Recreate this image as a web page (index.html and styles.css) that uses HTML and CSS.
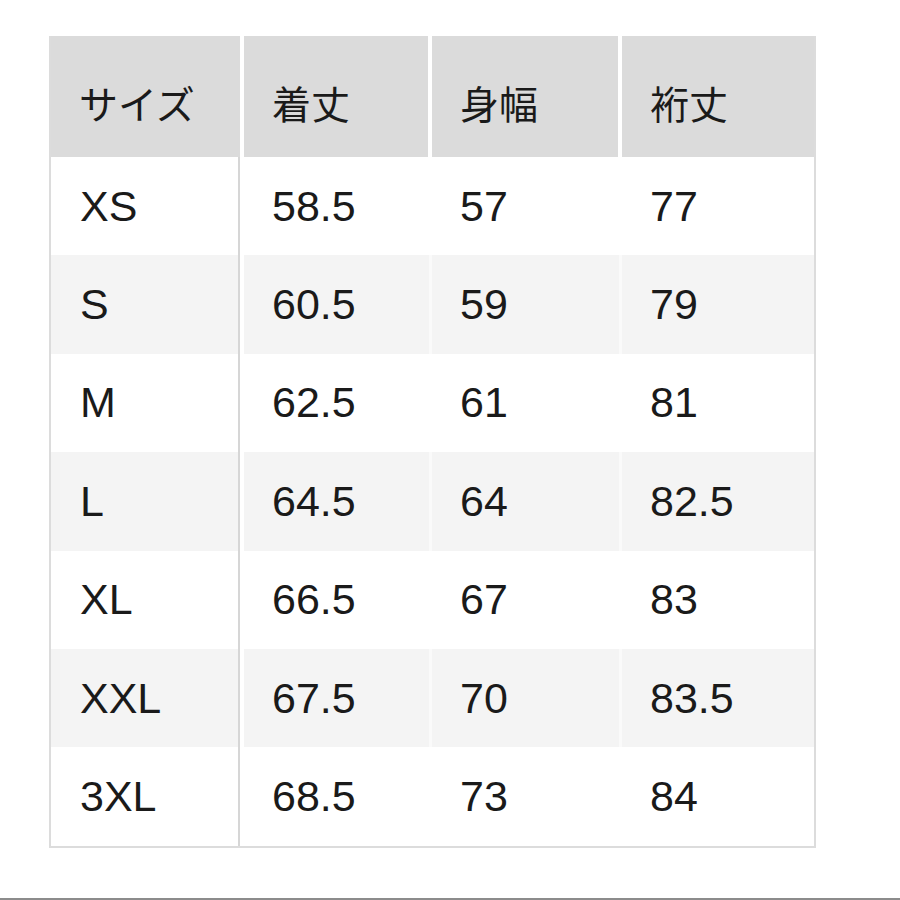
FILE: index.html
```html
<!DOCTYPE html>
<html lang="ja">
<head>
<meta charset="utf-8">
<title>サイズ表</title>
<link rel="stylesheet" href="styles.css">
</head>
<body>
<div class="page">
  <div class="table">
    <div class="cell head">サイズ</div>
    <div class="cell head">着丈</div>
    <div class="cell head">身幅</div>
    <div class="cell head last">裄丈</div>

    <div class="cell first">XS</div><div class="cell">58.5</div><div class="cell">57</div><div class="cell last">77</div>
    <div class="cell first alt">S</div><div class="cell alt">60.5</div><div class="cell alt">59</div><div class="cell alt last">79</div>
    <div class="cell first">M</div><div class="cell">62.5</div><div class="cell">61</div><div class="cell last">81</div>
    <div class="cell first alt">L</div><div class="cell alt">64.5</div><div class="cell alt">64</div><div class="cell alt last">82.5</div>
    <div class="cell first">XL</div><div class="cell">66.5</div><div class="cell">67</div><div class="cell last">83</div>
    <div class="cell first alt">XXL</div><div class="cell alt">67.5</div><div class="cell alt">70</div><div class="cell alt last">83.5</div>
    <div class="cell first">3XL</div><div class="cell">68.5</div><div class="cell">73</div><div class="cell last">84</div>
  </div>
  <div class="bottom-line"></div>
</div>
</body>
</html>
```
FILE: styles.css
```css
html, body {
  margin: 0;
  padding: 0;
  background: #ffffff;
}
.page {
  width: 900px;
  height: 900px;
  display: flex;
  flex-direction: column;
  box-sizing: border-box;
  padding-top: 36px;
}
.table {
  margin-left: 49px;
  width: 763px;
  display: grid;
  grid-template-columns: 193px 188px 190px 192px;
  grid-template-rows: 121px repeat(7, 98.4px);
  border-left: 2px solid #dcdcdc;
  border-right: 2px solid #dcdcdc;
  border-bottom: 2px solid #dcdcdc;
  background: #ffffff;
  font-family: "Liberation Sans", Arial, "Noto Sans CJK JP", sans-serif;
  font-size: 43px;
  color: #1a1a1a;
}
.cell {
  display: flex;
  align-items: center;
  padding-left: 28px;
  background: #ffffff;
  box-sizing: border-box;
}
.cell.alt {
  background: #f4f4f4;
  border-right: 3px solid #fafafa;
}
.cell.first {
  border-right: 2px solid #d6d6d6;
  margin-right: 4px;
  padding-left: 29px;
}
.cell.head {
  background: #dbdbdb;
  border-right: 4px solid #ffffff;
  margin-right: 0;
  font-family: "Noto Sans CJK JP", sans-serif;
  font-size: 39px;
  padding-top: 10px;
}
.cell.last {
  border-right: none;
}
.bottom-line {
  margin-top: auto;
  height: 2px;
  background: #8c8c8c;
}
```
